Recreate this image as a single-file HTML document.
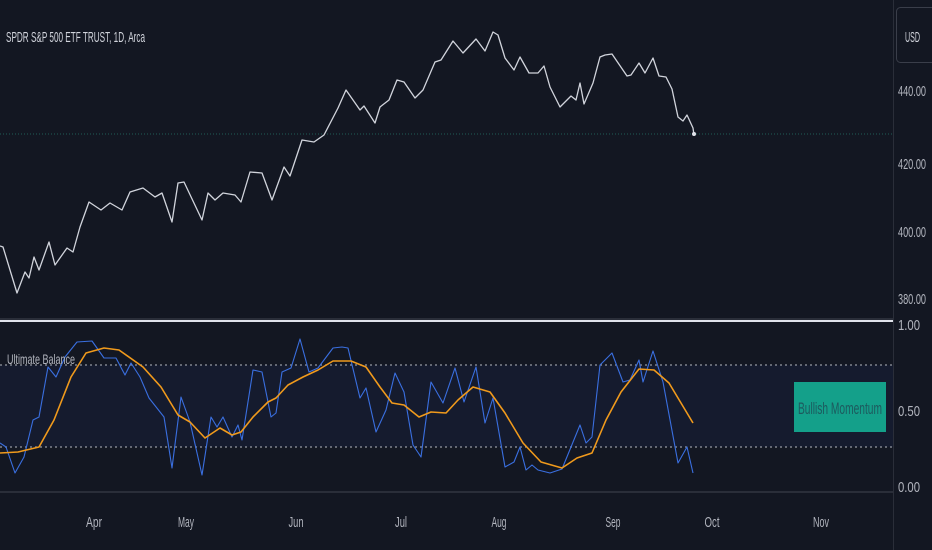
<!DOCTYPE html>
<html><head><meta charset="utf-8"><style>
html,body{margin:0;padding:0;background:#131722;}
svg{display:block}
text{font-family:"Liberation Sans",sans-serif;}
</style></head><body>
<svg width="932" height="550" viewBox="0 0 932 550" xmlns="http://www.w3.org/2000/svg">
<rect width="932" height="550" fill="#131722"/>
<rect x="0" y="365" width="893" height="82" fill="#151b2e"/>
<line x1="0" y1="134" x2="893" y2="134" stroke="#1f5c57" stroke-width="1" stroke-dasharray="1,2"/>
<polyline fill="none" stroke="#d1d4dc" stroke-width="1.3" stroke-linejoin="round" points="0,246 3,247 17,293 25,272 29,278 34,257 39,270 49,242 55,265 67,248 73,252 80,227 89,202 101,210 110,203 122,210 130,192 143,188 155,197 162,193 172,222 178,183 184,182 202,220 208,193 215,200 223,193 235,195 241,202 250,172 262,173 272,200 284,167 290,176 302,140 314,142 324,135 338,108 346,90 360,110 364,106 375,123 380,107 389,100 397,80 404,82 415,98 423,90 435,62 441,60 453,41 463,53 476,39 485,51 493,32 498,35 505,58 514,70 520,57 529,73 538,73 544,66 550,87 560,107 571,96 576,100 580,83 584,104 593,83 600,57 605,55 612,54 627,76 631,75 639,63 645,73 653,58 659,76 666,77 672,89 678,117 683,121 687,115 693,128 694,135"/>
<circle cx="694" cy="134" r="2" fill="#e0e3eb"/>
<rect x="0" y="320" width="893" height="2" fill="#e0e3eb"/>
<rect x="0" y="318" width="893" height="2" fill="#2a2e39"/>
<line x1="0" y1="365" x2="893" y2="365" stroke="#9598a1" stroke-width="1.3" stroke-dasharray="2,3"/>
<line x1="0" y1="447" x2="893" y2="447" stroke="#9598a1" stroke-width="1.3" stroke-dasharray="2,3"/>
<polyline fill="none" stroke="#3a6fe0" stroke-width="1.1" stroke-linejoin="round" points="0,443 6,447 15,473 24,457 33,420 39,417 48,367 56,377 65,357 77,342 92,341 104,358 116,358 125,375 131,363 140,377 149,398 164,417 172,468 181,397 190,422 202,475 211,417 217,427 223,417 232,437 238,425 242,440 253,370 262,372 271,417 276,413 282,372 291,368 300,339 309,372 318,368 333,348 342,347 348,348 360,398 366,388 376,432 386,410 395,373 404,392 413,445 421,457 431,382 443,403 455,368 464,402 476,367 485,423 493,398 505,467 514,462 520,447 526,470 532,465 538,470 550,473 562,469 571,447 580,425 586,443 592,437 600,365 612,353 623,382 630,380 639,360 643,382 653,351 663,382 678,463 687,447 693,473"/>
<polyline fill="none" stroke="#f09a1c" stroke-width="1.6" stroke-linejoin="round" points="0,453 18,452 39,447 54,420 71,377 86,353 104,348 119,350 143,367 161,387 178,415 190,422 205,438 220,428 232,435 241,432 253,417 268,402 276,398 288,385 303,377 318,370 333,361 351,361 366,367 380,387 392,403 404,405 419,417 431,412 446,413 458,400 473,387 490,392 505,413 523,443 541,462 562,468 577,458 592,453 606,420 621,392 639,369 654,370 669,383 693,423"/>
<rect x="794" y="382" width="92" height="50" fill="#14a08a"/>
<text x="840" y="414" font-size="17" fill="#1d5a5e" text-anchor="middle" textLength="84" lengthAdjust="spacingAndGlyphs">Bullish Momentum</text>
<text x="7" y="364" font-size="14" fill="#b2b5be" textLength="68" lengthAdjust="spacingAndGlyphs">Ultimate Balance</text>
<text x="6" y="42" font-size="15" fill="#d1d4dc" textLength="139" lengthAdjust="spacingAndGlyphs">SPDR S&amp;P 500 ETF TRUST, 1D, Arca</text>
<rect x="0" y="491" width="893" height="2" fill="#2a2e39"/>
<rect x="893" y="0" width="1" height="550" fill="#2a2e39"/>
<rect x="896.5" y="7.5" width="40" height="55" rx="4" fill="#131722" stroke="#3a3e4a"/>
<text x="905" y="42" font-size="15" fill="#d1d4dc" textLength="15" lengthAdjust="spacingAndGlyphs">USD</text>
<g font-size="15" fill="#b2b5be">
<text x="898" y="96" textLength="28" lengthAdjust="spacingAndGlyphs">440.00</text>
<text x="898" y="169" textLength="28" lengthAdjust="spacingAndGlyphs">420.00</text>
<text x="898" y="237" textLength="28" lengthAdjust="spacingAndGlyphs">400.00</text>
<text x="898" y="304" textLength="28" lengthAdjust="spacingAndGlyphs">380.00</text>
<text x="898" y="330" textLength="22" lengthAdjust="spacingAndGlyphs">1.00</text>
<text x="898" y="416" textLength="22" lengthAdjust="spacingAndGlyphs">0.50</text>
<text x="898" y="492" textLength="22" lengthAdjust="spacingAndGlyphs">0.00</text>
</g>
<g font-size="15" fill="#b2b5be" text-anchor="middle">
<text x="94" y="527" textLength="16" lengthAdjust="spacingAndGlyphs">Apr</text>
<text x="186" y="527" textLength="16" lengthAdjust="spacingAndGlyphs">May</text>
<text x="296" y="527" textLength="15" lengthAdjust="spacingAndGlyphs">Jun</text>
<text x="401" y="527" textLength="12" lengthAdjust="spacingAndGlyphs">Jul</text>
<text x="499" y="527" textLength="15" lengthAdjust="spacingAndGlyphs">Aug</text>
<text x="613" y="527" textLength="15" lengthAdjust="spacingAndGlyphs">Sep</text>
<text x="712" y="527" textLength="15" lengthAdjust="spacingAndGlyphs">Oct</text>
<text x="821" y="527" textLength="16" lengthAdjust="spacingAndGlyphs">Nov</text>
</g>
</svg>
</body></html>
